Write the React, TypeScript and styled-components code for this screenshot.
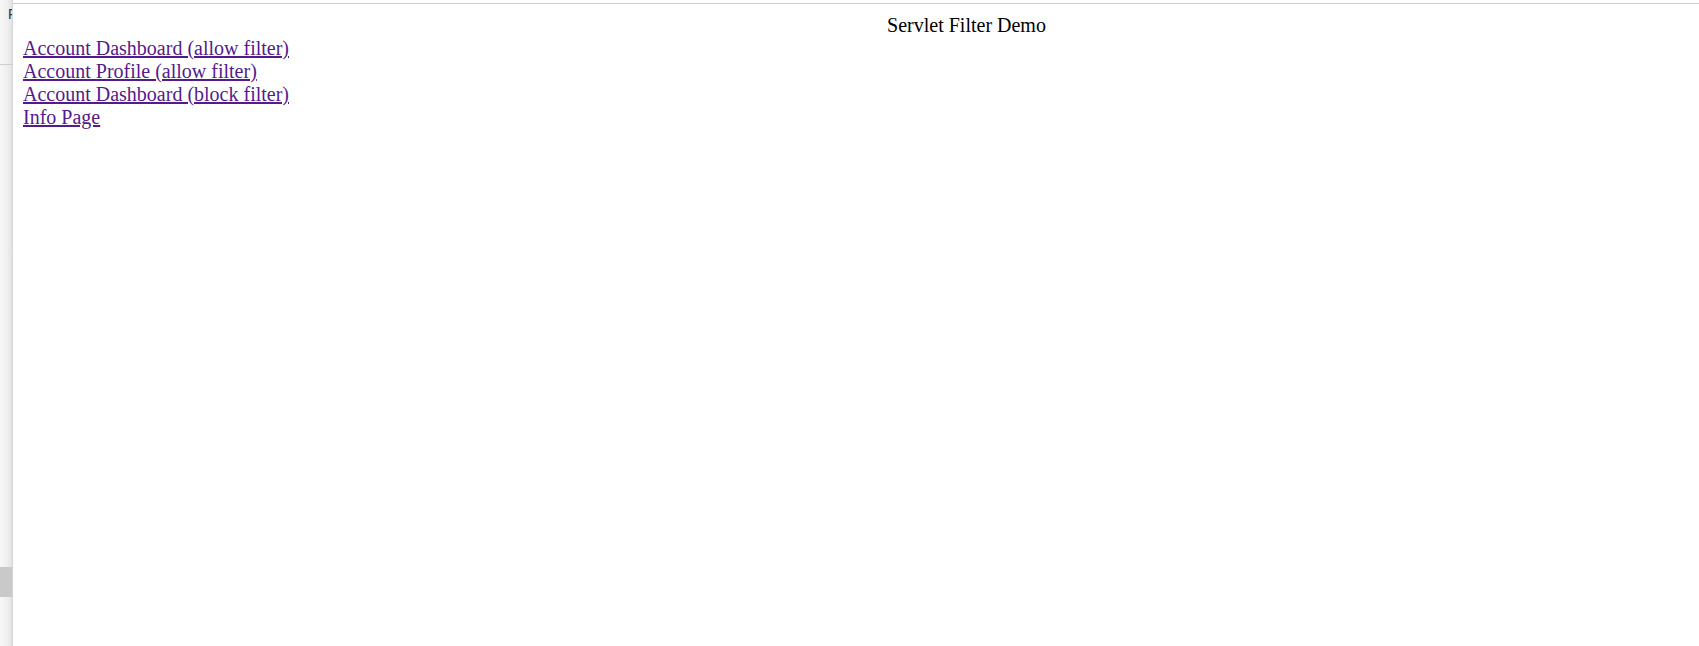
import React from "react";
import styled, { createGlobalStyle } from "styled-components";

const Global = createGlobalStyle`
  html, body { margin: 0; padding: 0; background: #fff; overflow: hidden; }
  body { width: 1699px; height: 646px; }
`;

const Shell = styled.div`
  display: flex;
  height: 646px;
  width: 1920px;
`;

const SideStrip = styled.div`
  width: 12px;
  flex: none;
  display: flex;
  flex-direction: column;
  overflow: hidden;
  background: linear-gradient(to right, #f7f7f7 0%, #efefef 60%, #e2e2e2 100%);
  border-right: 1px solid #d6d6d6;
`;

const StripLabel = styled.div`
  height: 65px;
  padding: 5px 0 0 8px;
  box-sizing: border-box;
  font-family: "Liberation Sans", Arial, sans-serif;
  font-size: 14px;
  line-height: 18px;
  color: #333;
  white-space: nowrap;
  overflow: hidden;
  border-bottom: 1px solid #cfcfcf;
`;

const StripSpacer = styled.div`
  flex: none;
  height: 502px;
`;

const StripBlock = styled.div`
  height: 30px;
  background: #c9c9c9;
`;

const Page = styled.div`
  flex: 1;
  display: flex;
  flex-direction: column;
  padding-top: 3px;
`;

const Frame = styled.div`
  flex: 1;
  border-top: 1px solid #cccccc;
  padding: 10px;
  font-family: "Liberation Serif", "Times New Roman", serif;
  font-size: 20px;
  line-height: 23px;
  color: #000;
`;

const Title = styled.div`
  text-align: center;
`;

const LinkList = styled.div`
  display: flex;
  flex-direction: column;
  align-items: flex-start;
`;

const NavLink = styled.a`
  color: #551a8b;
  text-decoration: underline;
`;

const links = [
  "Account Dashboard (allow filter)",
  "Account Profile (allow filter)",
  "Account Dashboard (block filter)",
  "Info Page",
];

export default function App() {
  return (
    <>
      <Global />
      <Shell>
        <SideStrip>
          <StripLabel>F</StripLabel>
          <StripSpacer />
          <StripBlock />
        </SideStrip>
        <Page>
          <Frame>
            <Title>Servlet Filter Demo</Title>
            <LinkList>
              {links.map((l) => (
                <NavLink key={l} href="#">
                  {l}
                </NavLink>
              ))}
            </LinkList>
          </Frame>
        </Page>
      </Shell>
    </>
  );
}
